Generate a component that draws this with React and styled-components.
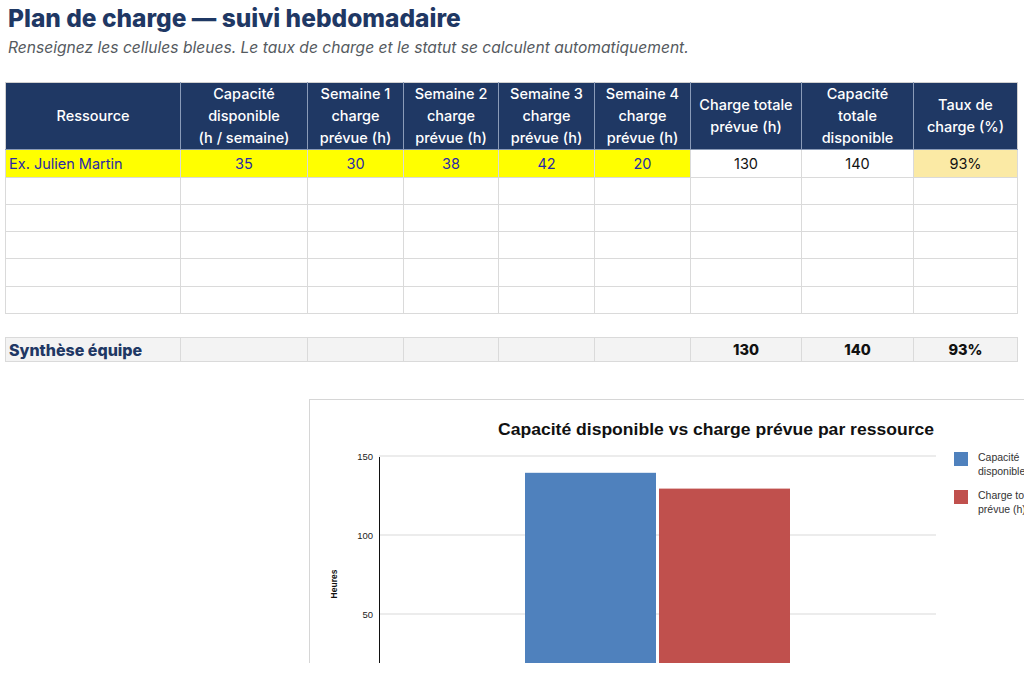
import React from 'react';
import styled, { createGlobalStyle } from 'styled-components';

const GlobalStyle = createGlobalStyle`
  html, body {
    margin: 0;
    padding: 0;
    background: #ffffff;
    overflow: hidden;
  }
  body {
    font-family: Inter, "Open Sans", sans-serif;
    color: #111;
  }
`;

const NAVY = '#1f3864';

const columns = [175, 127, 96, 95, 96, 96, 111, 112, 104];

const headers = [
  ['Ressource'],
  ['Capacité', 'disponible', '(h / semaine)'],
  ['Semaine 1', 'charge', 'prévue (h)'],
  ['Semaine 2', 'charge', 'prévue (h)'],
  ['Semaine 3', 'charge', 'prévue (h)'],
  ['Semaine 4', 'charge', 'prévue (h)'],
  ['Charge totale', 'prévue (h)'],
  ['Capacité', 'totale', 'disponible'],
  ['Taux de', 'charge (%)'],
];

const Page = styled.div`
  padding: 0 7px 0 5px;
  width: 1012px;
`;

const Header = styled.header`
  padding: 3px 0 0 3px;
  height: 82px;
  box-sizing: border-box;
`;

const Title = styled.h1`
  margin: 0;
  font-size: 24.5px;
  line-height: 30px;
  font-weight: 800;
  color: ${NAVY};
`;

const Subtitle = styled.p`
  margin: 5px 0 0;
  font-size: 15.6px;
  line-height: 20px;
  font-style: italic;
  color: #555a60;
`;

const Table = styled.table`
  border-collapse: collapse;
  table-layout: fixed;
  width: 1012px;
  margin-top: ${(p) => p.$top || 0}px;
`;

const Th = styled.th`
  background: ${NAVY};
  color: #ffffff;
  font-weight: 500;
  font-size: 14.5px;
  line-height: 22px;
  height: 66px;
  padding: 0 3px;
  border: 1px solid #8a9bb8;
  border-top-color: #d0d0d0;
  text-align: center;
  vertical-align: middle;
  white-space: nowrap;
  &:first-child { border-left-color: #d0d0d0; }
  &:last-child { border-right-color: #d0d0d0; }
`;

const Td = styled.td`
  height: ${(p) => p.$h || 26}px;
  padding: 0 3px;
  border: 1px solid #dadada;
  font-size: 14.5px;
  text-align: ${(p) => (p.$left ? 'left' : 'center')};
  background: ${(p) => p.$bg || '#ffffff'};
  color: ${(p) => p.$color || '#111'};
  font-weight: ${(p) => p.$weight || 400};
  white-space: nowrap;
`;

const SumLabel = styled.span`
  color: ${NAVY};
  font-weight: 800;
  font-size: 16px;
`;

const ChartBox = styled.div`
  margin: 37px 0 0 304px;
  width: 715px;
  height: 264px;
  overflow: hidden;
  border-top: 1px solid #d6d6d6;
  border-left: 1px solid #d6d6d6;
  box-sizing: border-box;
`;

const Svg = styled.svg`
  display: block;
  font-family: "Liberation Sans", Arial, sans-serif;
`;

const YELLOW = '#ffff00';
const BLUE_TXT = '#2a2aa8';

const Chart = () => {
  const zero = 294;
  const scale = 79 / 50;
  const y = (v) => zero - v * scale;
  return (
    <ChartBox>
      <Svg width="715" height="300" viewBox="0 0 715 300">
        <text x="406" y="35" textAnchor="middle" fontSize="17" fontWeight="700" fill="#111" textLength="436" lengthAdjust="spacingAndGlyphs">
          Capacité disponible vs charge prévue par ressource
        </text>
        {[150, 100, 50].map((v) => (
          <g key={v}>
            <line x1="69" x2="626" y1={y(v) - 1} y2={y(v) - 1} stroke="#d9d9d9" strokeWidth="1" />
            <text x="63" y={y(v) + 3} textAnchor="end" fontSize="9.5" fill="#222">{v}</text>
          </g>
        ))}
        <line x1="69.5" x2="69.5" y1="57" y2="300" stroke="#111" strokeWidth="1" />
        <text transform="translate(27 184) rotate(-90)" textAnchor="middle" fontSize="8.5" fontWeight="700" fill="#111">Heures</text>
        <rect x="215" y={y(140)} width="131" height="300" fill="#4f81bd" />
        <rect x="349" y={y(130)} width="131" height="300" fill="#c0504d" />
        <rect x="644" y="52" width="14" height="14" fill="#4f81bd" />
        <text x="668" y="61" fontSize="10.5" fill="#333">Capacité</text>
        <text x="668" y="75" fontSize="10.5" fill="#333">disponible</text>
        <rect x="644" y="90" width="14" height="14" fill="#c0504d" />
        <text x="668" y="99" fontSize="10.5" fill="#333">Charge totale</text>
        <text x="668" y="113" fontSize="10.5" fill="#333">prévue (h)</text>
      </Svg>
    </ChartBox>
  );
};

const Cols = () => (
  <colgroup>
    {columns.map((w, i) => <col key={i} style={{ width: w }} />)}
  </colgroup>
);

export default function App() {
  const sample = ['35', '30', '38', '42', '20'];
  const emptyRows = [26, 26, 26, 27, 26];
  return (
    <>
      <GlobalStyle />
      <Page>
        <Header>
          <Title>Plan de charge — suivi hebdomadaire</Title>
          <Subtitle>Renseignez les cellules bleues. Le taux de charge et le statut se calculent automatiquement.</Subtitle>
        </Header>
        <Table>
          <Cols />
          <thead>
            <tr>
              {headers.map((lines, i) => (
                <Th key={i}>
                  {lines.map((l, j) => <div key={j}>{l}</div>)}
                </Th>
              ))}
            </tr>
          </thead>
          <tbody>
            <tr>
              <Td $left $bg={YELLOW} $color={BLUE_TXT} $h={27}>Ex. Julien Martin</Td>
              {sample.map((v, i) => (
                <Td key={i} $bg={YELLOW} $color={BLUE_TXT} $h={27}>{v}</Td>
              ))}
              <Td $h={27}>130</Td>
              <Td $h={27}>140</Td>
              <Td $bg="#fbeaa5" $h={27}>93%</Td>
            </tr>
            {emptyRows.map((h, r) => (
              <tr key={r}>
                {columns.map((_, i) => <Td key={i} $h={h} />)}
              </tr>
            ))}
          </tbody>
        </Table>
        <Table $top={23}>
          <Cols />
          <tbody>
            <tr>
              <Td $left $bg="#f3f3f3" $h={23}><SumLabel>Synthèse équipe</SumLabel></Td>
              {[0, 1, 2, 3, 4].map((i) => <Td key={i} $bg="#f3f3f3" $h={23} />)}
              <Td $bg="#f3f3f3" $weight={800} $h={23}>130</Td>
              <Td $bg="#f3f3f3" $weight={800} $h={23}>140</Td>
              <Td $bg="#f3f3f3" $weight={800} $h={23}>93%</Td>
            </tr>
          </tbody>
        </Table>
        <Chart />
      </Page>
    </>
  );
}
